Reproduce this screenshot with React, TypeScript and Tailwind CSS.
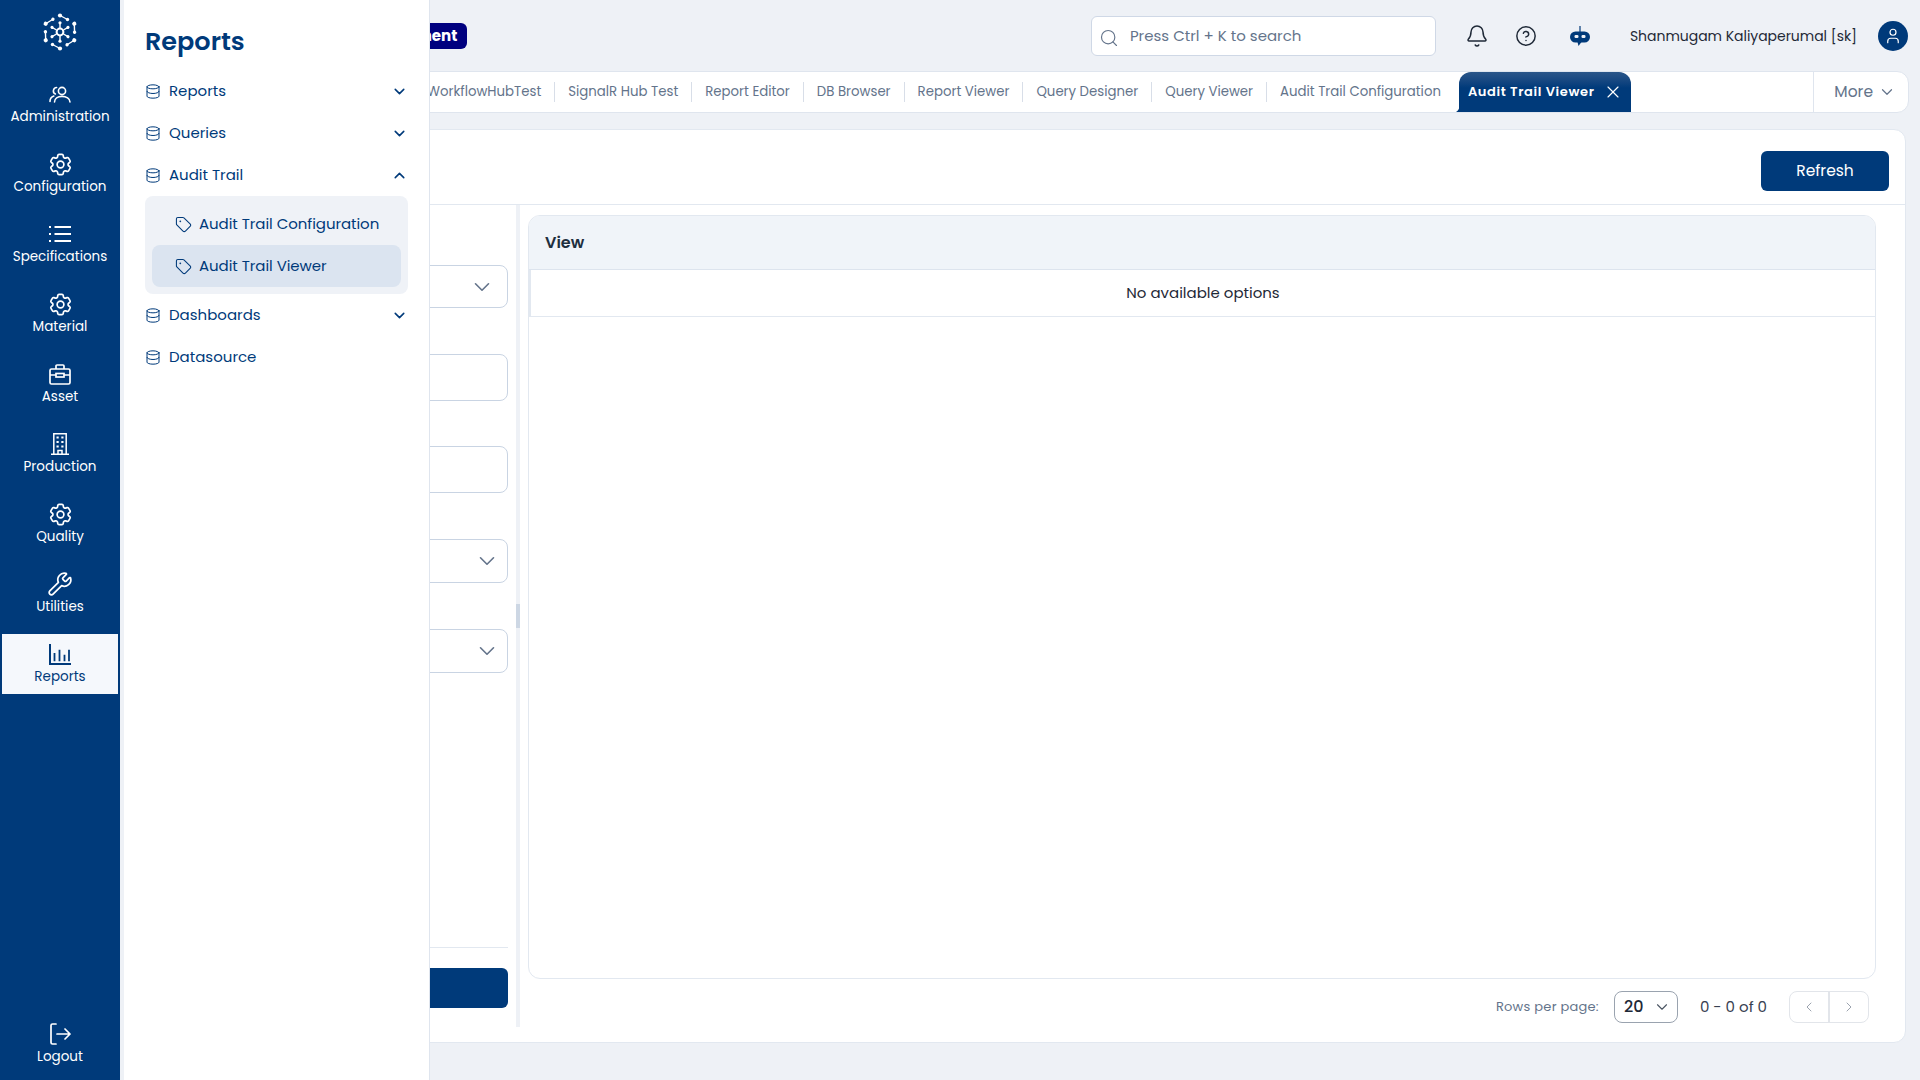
import { ChevronDown, ChevronUp, ChevronLeft, ChevronRight, Database, Tag, Search, Bell, CircleHelp, X, Wrench, User } from "lucide-react";
import { HiOutlineCog6Tooth } from "react-icons/hi2";
import type { ReactNode } from "react";

function UsersIcon() {
  return (
    <svg width="22" height="17" viewBox="0 0 22 17" fill="none" stroke="currentColor" strokeWidth="1.6" strokeLinecap="round">
      <circle cx="13" cy="5" r="3.6" />
      <path d="M5.5 16c0-3.6 3.3-5.6 7.5-5.6s8 2 8 5.6" />
      <path d="M7.6 1.5A3.4 3.4 0 0 0 6.4 8" />
      <path d="M1 15.5c0-2.6 1.4-4.6 3.8-5.4" />
    </svg>
  );
}

function GearIcon() {
  return <HiOutlineCog6Tooth className="w-[27px] h-[27px]" />;
}

function ListIcon() {
  return (
    <svg width="22" height="16" viewBox="0 0 22 16" fill="none" stroke="currentColor" strokeWidth="1.8">
      <path d="M5.5 1H22M5.5 8H22M5.5 15H22" />
      <path d="M0 1h2M0 8h2M0 15h2" />
    </svg>
  );
}

function BriefcaseIcon() {
  return (
    <svg width="22" height="21" viewBox="0 0 22 21" fill="none" stroke="currentColor" strokeWidth="1.7">
      <rect x="1" y="5" width="20" height="15" rx="1.5" />
      <path d="M7 5V2a1 1 0 0 1 1-1h6a1 1 0 0 1 1 1v3" />
      <path d="M1 11h6M15 11h6" />
      <rect x="7" y="9.5" width="8" height="3.5" />
    </svg>
  );
}

function BuildingIcon() {
  return (
    <svg width="18" height="22" viewBox="0 0 18 22" fill="none" stroke="currentColor" strokeWidth="1.5">
      <path d="M0 21.2h18M2.8 21.2V.8h12.4v20.4" />
      <path d="M7 21v-3.5h4V21" />
      <g fill="currentColor" stroke="none">
        <rect x="5.5" y="3.5" width="2.2" height="2" />
        <rect x="10.3" y="3.5" width="2.2" height="2" />
        <rect x="5.5" y="8" width="2.2" height="2" />
        <rect x="10.3" y="8" width="2.2" height="2" />
        <rect x="5.5" y="12.5" width="2.2" height="2" />
        <rect x="10.3" y="12.5" width="2.2" height="2" />
      </g>
    </svg>
  );
}

function ChartIcon() {
  return (
    <svg width="22" height="21" viewBox="0 0 22 21" fill="none" stroke="currentColor" strokeWidth="1.8">
      <path d="M1 0v20h21" strokeWidth="2" />
      <path d="M5.5 9v8.3M10.5 5.7v11.6M15.5 10.7v6.6M20 5.7v11.6" />
    </svg>
  );
}

function LogoutIcon() {
  return (
    <svg width="22" height="22" viewBox="0 0 22 22" fill="none" stroke="currentColor" strokeWidth="1.7" strokeLinecap="round" strokeLinejoin="round">
      <path d="M7 1H3.500A1.500 1.500 0 0 0 2 2.500v17A1.500 1.500 0 0 0 3.500 21H7" />
      <path d="M8 11h13M16 6l5 5-5 5" />
    </svg>
  );
}

const railItems: { label: string; icon: ReactNode }[] = [
  { label: "Administration", icon: <UsersIcon /> },
  { label: "Configuration", icon: <GearIcon /> },
  { label: "Specifications", icon: <ListIcon /> },
  { label: "Material", icon: <GearIcon /> },
  { label: "Asset", icon: <BriefcaseIcon /> },
  { label: "Production", icon: <BuildingIcon /> },
  { label: "Quality", icon: <GearIcon /> },
  { label: "Utilities", icon: <Wrench className="w-[26px] h-[26px]" strokeWidth={1.6} /> },
];

const tabs = ["WorkflowHubTest", "SignalR Hub Test", "Report Editor", "DB Browser", "Report Viewer", "Query Designer", "Query Viewer", "Audit Trail Configuration"];

function Logo() {
  const outer = [0, 60, 120, 180, 240, 300];
  return (
    <svg width="36" height="38" viewBox="0 0 36 38" fill="none" stroke="white" strokeWidth="1.4">
      <circle cx="18" cy="19" r="3.4" strokeWidth="2" />
      {outer.map((a) => (
        <g key={a} transform={`rotate(${a} 18 19)`}>
          <circle cx="18" cy="2.500" r="2.100" fill="white" stroke="none" />
          <circle cx="25.500" cy="6.500" r="1.700" fill="white" stroke="none" />
          <path d="M18 2.500 L25.500 6.500" />
          <circle cx="18" cy="9.800" r="1.600" fill="white" stroke="none" />
          <path d="M18 9.800 L18 15" />
        </g>
      ))}
    </svg>
  );
}

function Bot() {
  return (
    <svg width="20" height="21" viewBox="0 0 20 21">
      <path d="M10 0v6" stroke="#003a7a" strokeWidth="1.2" />
      <rect x="0" y="5.500" width="20" height="11" rx="5.500" fill="#003a7a" />
      <rect x="4.500" y="9" width="4" height="3" rx="1.200" fill="#eef1f6" />
      <rect x="11.500" y="9" width="4" height="3" rx="1.200" fill="#eef1f6" />
      <path d="M7.500 16h4l-3 4z" fill="#003a7a" />
    </svg>
  );
}

function MenuRow({ label, open }: { label: string; open?: boolean }) {
  return (
    <div className="flex items-center h-[42px] pl-[21px] pr-[21px] text-[#003a7a]">
      <Database className="w-[16px] h-[17px] mr-[8px]" strokeWidth={1.5} />
      <span className="flex-1 text-[15px]">{label}</span>
      {open === true && <ChevronUp className="w-[17px] h-[17px]" strokeWidth={2.2} />}
      {open === false && <ChevronDown className="w-[17px] h-[17px]" strokeWidth={2.2} />}
    </div>
  );
}

function SubRow({ label, active }: { label: string; active?: boolean }) {
  return (
    <div className={`flex items-center h-[42px] rounded-lg pl-[23px] text-[#003a7a] ${active ? "bg-[#dbe4f0]" : ""}`}>
      <Tag className="w-[17px] h-[17px] mr-[7px]" strokeWidth={1.5} />
      <span className="text-[15px] tracking-[-0.05px]">{label}</span>
    </div>
  );
}

function SelectBox({ h, chevronRight }: { h: string; chevronRight: string }) {
  return (
    <div className={`flex items-center justify-end border border-[#c9d4e3] rounded-lg bg-white ${h} ${chevronRight}`}>
      <ChevronDown className="w-[26px] h-[26px] text-[#64748b]" strokeWidth={1.5} />
    </div>
  );
}

export default function App() {
  return (
    <div className="relative flex h-[1080px] w-[1920px] overflow-hidden bg-[#eef1f6] font-['Poppins','Inter',sans-serif]">
      {/* left rail */}
      <aside className="flex flex-col w-[120px] shrink-0 bg-[#003a7a] text-white">
        <div className="flex justify-center pt-[13px] h-[74px]">
          <Logo />
        </div>
        {railItems.map(({ label, icon }) => (
          <div key={label} className="flex flex-col items-center h-[70px] pt-[8px]">
            <div className="flex items-center justify-center h-6">{icon}</div>
            <span className="text-[13.5px] leading-[22px]">{label}</span>
          </div>
        ))}
        <div className="flex flex-col items-center h-[60px] pt-[8px] mx-[2px] bg-[#f5f8fc] text-[#003a7a]">
          <div className="flex items-center justify-center h-6"><ChartIcon /></div>
          <span className="text-[13.5px] leading-[22px]">Reports</span>
        </div>
        <div className="mt-auto flex flex-col items-center pb-[12px]">
          <div className="flex items-center justify-center h-6"><LogoutIcon /></div>
          <span className="text-[13.5px] leading-[22px]">Logout</span>
        </div>
      </aside>

      {/* main */}
      <main className="flex-1 flex flex-col min-w-0 pr-[11px]">
        <header className="flex items-center h-[71px] shrink-0 pt-[1px]">
          <div className="ml-[223px] flex items-center h-[26px] px-[10px] rounded-md bg-[#00007f] text-white text-[15px] font-bold">Development</div>
          <div className="ml-auto flex items-center w-[345px] h-[40px] pl-[7px] bg-white border border-[#cfd8e6] rounded-md text-[#64748b]">
            <Search className="w-5 h-5 mr-[11px] mt-[4px]" strokeWidth={1.4} />
            <span className="text-[15px]">Press Ctrl + K to search</span>
          </div>
          <Bell className="ml-[29px] w-6 h-6 text-[#1f2937]" strokeWidth={1.5} />
          <CircleHelp className="ml-[26px] w-[22px] h-[22px] text-[#1f2937]" strokeWidth={1.6} />
          <div className="ml-[33px]"><Bot /></div>
          <span className="ml-[40px] text-[14px] tracking-[-0.03px] text-[#1f2937]">Shanmugam Kaliyaperumal [sk]</span>
          <div className="ml-[21px] mr-[1px] flex items-center justify-center w-[30px] h-[30px] rounded-full bg-[#003a7a]">
            <User className="w-[18px] h-[18px] text-white" strokeWidth={1.6} />
          </div>
        </header>

        <nav className="flex items-center h-[42px] shrink-0 bg-white border border-[#dfe5ee] rounded-xl">
          <div className="flex items-center ml-[293px]">
            {tabs.map((t) => (
              <span key={t} className="px-[13px] text-[13.3px] text-[#64748b] border-r border-[#d8dee8] last:border-r-0 whitespace-nowrap">{t}</span>
            ))}
          </div>
          <div className="relative ml-[5px] flex items-center self-stretch pl-[9px] pr-[8px] rounded-t-xl bg-gradient-to-b from-[#2a5689] to-[#003a7a] to-40% text-white">
            <svg className="absolute -left-[3px] bottom-0" width="4" height="6" viewBox="0 0 4 6"><path d="M4 0v6H0c2 -1 3 -3 4 -6z" fill="#003a7a" /></svg>
            <span className="text-[13px] font-semibold tracking-[0.62px]">Audit Trail Viewer</span>
            <X className="ml-[8px] w-5 h-5" strokeWidth={1.4} />
          </div>
          <div className="ml-auto flex items-center self-stretch pl-[20px] pr-[12px] border-l border-[#dfe5ee] text-[#64748b]">
            <span className="text-[15.5px]">More</span>
            <ChevronDown className="ml-[5px] w-[18px] h-[18px]" strokeWidth={1.6} />
          </div>
        </nav>

        <section className="mt-[16px] mb-[37px] ml-[12px] mr-[3px] flex-1 flex flex-col bg-white border border-[#e2e8f0] rounded-xl min-h-0">
          <div className="flex justify-end items-start h-[75px] shrink-0 pt-[21px] pr-[16px] border-b border-[#e2e8f0]">
            <button className="w-[128px] h-[40px] rounded-md bg-[#003a7a] text-white text-[15.5px]">Refresh</button>
          </div>
          <div className="flex flex-1 min-h-0">
            <div className="flex-1 flex flex-col pr-[8px] pt-[60px] pb-[34px]">
              <SelectBox h="h-[43px]" chevronRight="pr-[12px]" />
              <div className="mt-[46px] h-[47px] border border-[#c9d4e3] rounded-lg" />
              <div className="mt-[45px] h-[47px] border border-[#c9d4e3] rounded-lg" />
              <div className="mt-[46px]"><SelectBox h="h-[44px]" chevronRight="pr-[7px]" /></div>
              <div className="mt-[46px]"><SelectBox h="h-[44px]" chevronRight="pr-[7px]" /></div>
              <div className="mt-auto border-t border-[#e2e8f0] pt-[20px]">
                <div className="h-[40px] rounded-md bg-[#003a7a]" />
              </div>
            </div>
            <div className="relative w-[4px] mb-[15px] bg-[#eef1f6]">
              <div className="absolute top-[399px] left-0 w-[4px] h-[24px] bg-[#cdd7e4]" />
            </div>
            <div className="w-[1385px] shrink-0 flex flex-col pl-[8px] pr-[29px] pt-[10px] pb-[19px]">
              <div className="flex-1 flex flex-col border border-[#e2e8f0] rounded-xl overflow-hidden">
                <div className="flex items-center h-[54px] px-[16px] bg-[#f0f4f9] border-b border-[#dde4ee]">
                  <span className="text-[16px] font-semibold text-[#1e2f3f]">View</span>
                </div>
                <div className="flex items-center justify-center h-[47px] border-b border-l-2 border-[#e2e8f0] text-[15px] text-[#1f2937]">No available options</div>
              </div>
              <div className="flex items-center justify-end h-[32px] mt-[12px] pr-[7px]">
                <span className="text-[13px] tracking-[0.25px] text-[#64748b]">Rows per page:</span>
                <div className="ml-[15px] flex items-center justify-between w-[64px] h-[32px] pl-[9px] pr-[6px] border border-[#9aa3af] rounded-lg">
                  <span className="text-[16px] font-medium text-[#1f2937]">20</span>
                  <ChevronDown className="w-[18px] h-[18px] text-[#4b5563]" strokeWidth={1.5} />
                </div>
                <span className="ml-[22px] text-[15px] text-[#374151]">0 - 0 of 0</span>
                <div className="ml-[22px] flex h-[32px] w-[80px] border border-[#e2e5ea] rounded-lg text-[#9ca3af]">
                  <div className="flex-1 flex items-center justify-center border-r-2 border-[#e2e5ea]"><ChevronLeft className="w-4 h-4" strokeWidth={1.5} /></div>
                  <div className="flex-1 flex items-center justify-center"><ChevronRight className="w-4 h-4" strokeWidth={1.5} /></div>
                </div>
              </div>
            </div>
          </div>
        </section>
      </main>

      {/* reports flyout */}
      <div className="absolute top-0 left-[120px] h-full w-[310px] pl-[4px] bg-[#eef1f6]">
        <div className="h-full bg-white border-r border-[#dfe5ee]">
          <h2 className="pl-[21px] pt-[21px] h-[70px] text-[25.5px] leading-[40px] font-semibold text-[#003a7a]">Reports</h2>
          <MenuRow label="Reports" open={false} />
          <MenuRow label="Queries" open={false} />
          <MenuRow label="Audit Trail" open={true} />
          <div className="mx-[21px] p-[7px] bg-[#eff2f7] rounded-lg">
            <SubRow label="Audit Trail Configuration" />
            <SubRow label="Audit Trail Viewer" active />
          </div>
          <MenuRow label="Dashboards" open={false} />
          <MenuRow label="Datasource" />
        </div>
      </div>
    </div>
  );
}
